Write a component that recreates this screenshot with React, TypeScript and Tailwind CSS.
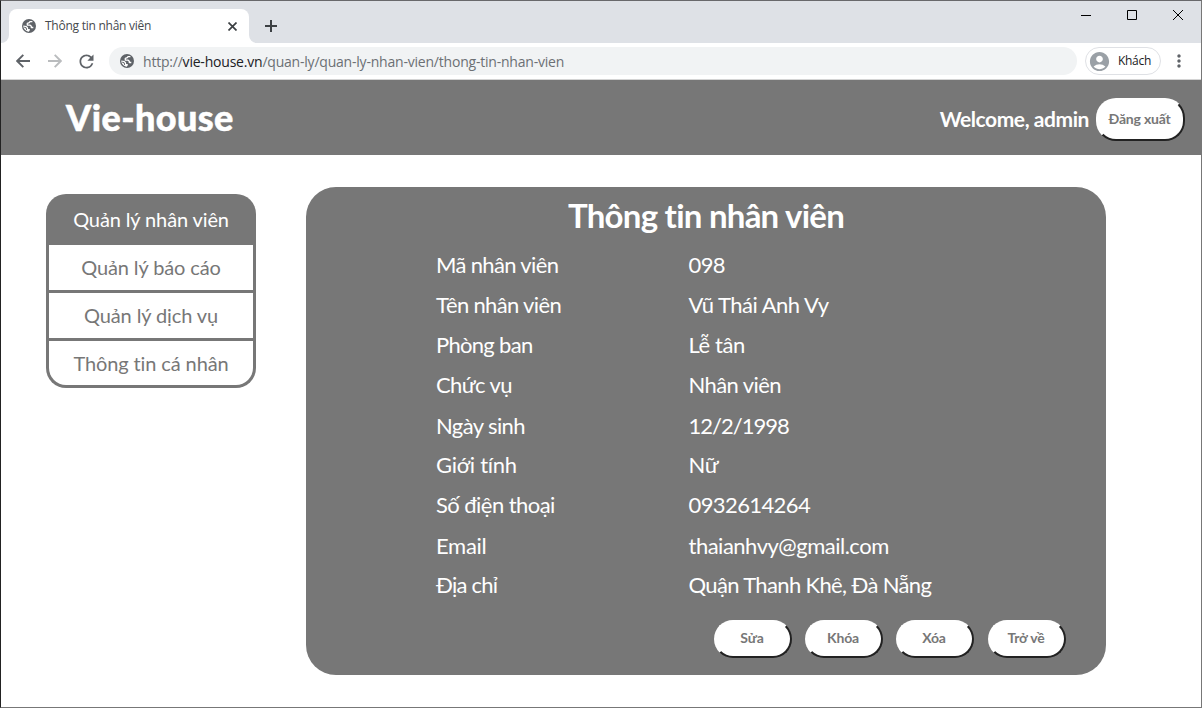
import React from "react";
import { MdRefresh, MdAccountCircle, MdMoreVert } from "react-icons/md";

const menu = ["Quản lý báo cáo", "Quản lý dịch vụ", "Thông tin cá nhân"];

type Field = { label: string; value: string; row: string; k: string; v: string };

const fields: Field[] = [
  { label: "Mã nhân viên", value: "098", row: "h-10", k: "tracking-[-0.65px]", v: "tracking-[-0.6px]" },
  { label: "Tên nhân viên", value: "Vũ Thái Anh Vy", row: "h-10", k: "tracking-[-0.65px]", v: "tracking-[-0.5px]" },
  { label: "Phòng ban", value: "Lễ tân", row: "h-10", k: "tracking-[-0.7px]", v: "tracking-[-0.4px]" },
  { label: "Chức vụ", value: "Nhân viên", row: "h-[41px]", k: "tracking-[-0.6px]", v: "tracking-[-0.6px]" },
  { label: "Ngày sinh", value: "12/2/1998", row: "h-[39px]", k: "tracking-[-0.6px]", v: "tracking-[-1px]" },
  { label: "Giới tính", value: "Nữ", row: "h-10", k: "tracking-[-0.3px]", v: "tracking-[-0.4px]" },
  { label: "Số điện thoại", value: "0932614264", row: "h-[41px]", k: "tracking-[-0.55px]", v: "tracking-[-0.6px]" },
  { label: "Email", value: "thaianhvy@gmail.com", row: "h-[39px]", k: "tracking-[-0.3px]", v: "tracking-[-0.5px]" },
  { label: "Địa chỉ", value: "Quận Thanh Khê, Đà Nẵng", row: "h-10", k: "tracking-[-0.75px]", v: "tracking-[-0.64px]" },
];

const actions = ["Sửa", "Khóa", "Xóa", "Trở về"];

function Globe() {
  return (
    <svg className="size-[14px] shrink-0" viewBox="0 0 14 14">
      <circle cx="7" cy="7" r="7" fill="#5f6368" />
      <path
        d="M10.400 2.700H8L7.300 3.700 5.300 4.400V6.200H8.200L9.300 7.300V8.500H11.300"
        fill="none"
        stroke="#fff"
        strokeWidth="1.300"
        strokeLinejoin="round"
      />
      <path d="M1.300 6.600L4.500 7.100 6.100 8.600V9.900H7.800V11.300L6.800 12.700C4 12.500 1.300 10.200 1.300 6.600z" fill="#fff" />
      <path d="M2.200 8.200L4.200 8.800 4.600 10.900" fill="none" stroke="#5f6368" strokeWidth="1" />
    </svg>
  );
}

function TabStrip() {
  return (
    <div className="flex h-[42px] shrink-0 items-end bg-[#dee1e6]">
      <div className="h-[34px] w-2 bg-white">
        <div className="h-full w-full rounded-br-lg bg-[#dee1e6]" />
      </div>
      <div className="flex h-[34px] w-60 items-center rounded-t-lg bg-white pr-3 pl-[13px]">
        <Globe />
        <span className="ml-[9px] flex-1 text-[12px] tracking-[-0.25px] whitespace-nowrap text-[#45494d]">
          Thông tin nhân viên
        </span>
        <svg className="size-[9px]" viewBox="0 0 9 9" stroke="#3c4043" strokeWidth="1.7">
          <path d="M.5.5l8 8M8.500.5l-8 8" />
        </svg>
      </div>
      <div className="h-[34px] w-2 bg-white">
        <div className="h-full w-full rounded-bl-lg bg-[#dee1e6]" />
      </div>
      <svg className="mb-[11px] ml-2 size-3" viewBox="0 0 12 12" stroke="#3c4043" strokeWidth="2">
        <path d="M6 0v12M0 6h12" />
      </svg>
      <div className="ml-auto flex gap-9 self-start pt-[9px] pr-[18px]">
        <svg className="size-[10px]" viewBox="0 0 10 10" stroke="#000" fill="none">
          <path d="M0 5.500h10" />
        </svg>
        <svg className="size-[10px]" viewBox="0 0 10 10" stroke="#000" fill="none">
          <path d="M.5.5h9v9h-9z" />
        </svg>
        <svg className="size-[10px]" viewBox="0 0 10 10" stroke="#000" fill="none">
          <path d="M0 0l10 10M10 0L0 10" />
        </svg>
      </div>
    </div>
  );
}

function Toolbar() {
  return (
    <div className="flex h-[37px] shrink-0 items-center border-b border-[#d4d4d4] bg-white pl-[15px]">
      <svg className="size-[14px]" viewBox="0 0 14 14" fill="none" stroke="#5f6368" strokeWidth="1.9">
        <path d="M14 7H1.500M7.300.8L1.200 7l6.100 6.200" />
      </svg>
      <svg className="ml-[18px] size-[14px]" viewBox="0 0 14 14" fill="none" stroke="#babcbe" strokeWidth="1.9">
        <path d="M0 7h12.500M6.700.8L12.800 7l-6.100 6.200" />
      </svg>
      <MdRefresh className="ml-[14px] size-[21px] text-[#5f6368]" />
      <div className="ml-3 flex h-7 w-[968px] items-center rounded-full bg-[#f1f3f4] pl-[11px]">
        <Globe />
        <span className="ml-[9px] text-[14px] tracking-[-0.21px] whitespace-nowrap text-[#6c7074]">
          http://<span className="text-[#202124]">vie-house.vn</span>/quan-ly/quan-ly-nhan-vien/thong-tin-nhan-vien
        </span>
      </div>
      <div className="ml-2 flex h-7 w-[76px] items-center rounded-full border border-[#dfe1e5] pl-[2px]">
        <MdAccountCircle className="size-[23px] shrink-0 text-[#9aa0a6]" />
        <span className="ml-[7px] text-[12px] tracking-[-0.3px] text-[#202124]">Khách</span>
      </div>
      <MdMoreVert className="ml-2 size-5 text-[#5f6368]" />
    </div>
  );
}

function Header() {
  return (
    <header className="flex h-[75px] shrink-0 items-center bg-[#777] pr-4 pl-[65px] text-white">
      <h1 className="pb-[2px] text-[36px] leading-none font-black tracking-[0.4px] [-webkit-text-stroke:0.5px_white]">Vie-house</h1>
      <span className="ml-auto pt-[2px] text-[21px] font-bold tracking-[-0.43px]">Welcome, admin</span>
      <button className="mt-[3px] ml-[7px] h-[43px] w-[89px] rounded-[20px] border-2 border-t-white border-r-[#222] border-b-[#222] border-l-white bg-white pr-[6px] pb-[2px] pl-[4px] text-[14px] font-bold tracking-[-0.2px] whitespace-nowrap text-[#777]">
        Đăng xuất
      </button>
    </header>
  );
}

export default function App() {
  return (
    <div className="relative flex h-[708px] w-[1202px] flex-col overflow-hidden border-t border-r border-b border-l border-t-[#68686b] border-r-[#777] border-b-[#777] border-l-[#222] bg-white font-['Open_Sans',sans-serif]">
      <TabStrip />
      <Toolbar />
      <div className="flex flex-1 flex-col font-['Lato',sans-serif] [font-variant-ligatures:none]">
        <Header />
        <main className="flex items-start pt-8 pl-[45px]">
          <nav className="mt-[7px] flex h-[194px] w-[210px] flex-col gap-[3px] rounded-[20px] bg-[#777] p-[3px] text-center text-[20px] leading-[44px] tracking-[-0.12px] text-[#777]">
            <div className="h-[45px] shrink-0 text-white">Quản lý nhân viên</div>
            {menu.map((label) => (
              <div key={label} className="h-[45px] shrink-0 bg-white last:h-[44px] last:rounded-b-[17px]">
                {label}
              </div>
            ))}
          </nav>
          <section className="ml-[50px] h-[488px] w-[800px] rounded-[30px] bg-[#777] pt-[9px] text-white">
            <h2 className="h-[49px] text-center text-[33px] leading-[38px] font-bold tracking-[-0.75px]">Thông tin nhân viên</h2>
            <dl className="pl-[130px] text-[22px] leading-10">
              {fields.map((f) => (
                <div key={f.label} className={`flex items-start whitespace-nowrap ${f.row}`}>
                  <dt className={`w-[252.500px] ${f.k}`}>{f.label}</dt>
                  <dd className={f.v}>{f.value}</dd>
                </div>
              ))}
            </dl>
            <div className="mt-[15px] flex justify-end gap-[13px] pr-10">
              {actions.map((a) => (
                <button
                  key={a}
                  className="h-[38px] w-[78px] rounded-[20px] border-2 border-t-white border-r-[#222] border-b-[#222] border-l-white bg-white pr-[8px] pb-[3px] pl-[6px] text-[14px] font-bold tracking-[-0.15px] whitespace-nowrap text-[#777] last:ml-px"
                >
                  {a}
                </button>
              ))}
            </div>
          </section>
        </main>
      </div>
      <div className="absolute top-[-1px] right-[-1px] h-[173px] w-px bg-[#222]" />
      <div className="absolute bottom-[-1px] left-[-1px] h-px w-[496px] bg-[#222]" />
    </div>
  );
}
